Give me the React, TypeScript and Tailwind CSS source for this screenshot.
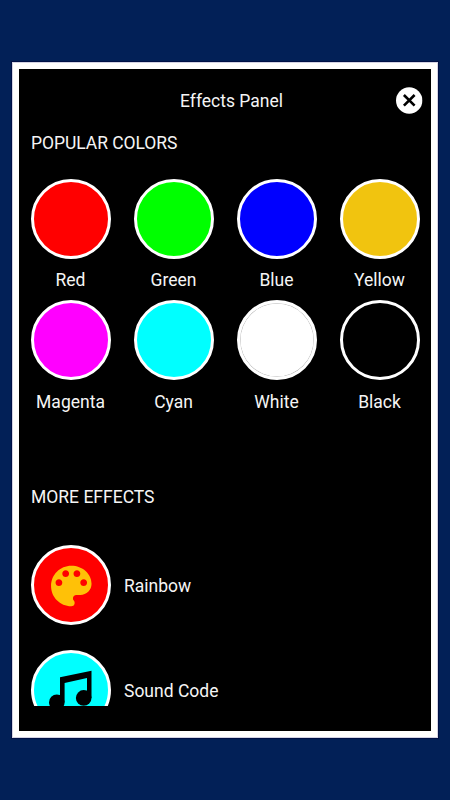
import React from "react";

const colors = [
  { name: "Red", fill: "bg-[#ff0000]" },
  { name: "Green", fill: "bg-[#00ff00]" },
  { name: "Blue", fill: "bg-[#0000ff]" },
  { name: "Yellow", fill: "bg-[#f1c40f]" },
  { name: "Magenta", fill: "bg-[#ff00ff]" },
  { name: "Cyan", fill: "bg-[#00ffff]" },
  { name: "White", fill: "bg-white shadow-[inset_0_0_0_0.5px_#b0b0b0]" },
  { name: "Black", fill: "bg-black" },
];

function Disc({ fill, children }: { fill: string; children?: React.ReactNode }) {
  return (
    <div className={`flex size-20 shrink-0 items-center justify-center rounded-full border-[3px] border-white ${fill}`}>
      {children}
    </div>
  );
}

function PaletteIcon() {
  return (
    <svg viewBox="0 0 24 24" className="size-[54px] shrink-0 translate-x-[0.3px] translate-y-[1px]" fill="#ffc107">
      <path d="M12 3c-4.97 0-9 4.03-9 9s4.03 9 9 9c.83 0 1.500-.67 1.500-1.500 0-.39-.15-.74-.39-1.010-.23-.26-.38-.61-.38-.99 0-.83.67-1.500 1.500-1.500H16c2.760 0 5-2.240 5-5 0-4.420-4.030-8-9-8zm-5.500 9c-.83 0-1.500-.67-1.500-1.500S5.670 9 6.500 9 8 9.670 8 10.500 7.330 12 6.500 12zm3-4C8.670 8 8 7.330 8 6.500S8.670 5 9.500 5s1.500.67 1.500 1.500S10.330 8 9.500 8zm5 0c-.83 0-1.500-.67-1.500-1.500S13.670 5 14.500 5s1.500.67 1.500 1.500S15.330 8 14.500 8zm3 4c-.83 0-1.500-.67-1.500-1.500S16.670 9 17.500 9s1.500.67 1.500 1.500-.67 1.500-1.500 1.500z" />
    </svg>
  );
}

function MusicIcon() {
  return (
    <svg viewBox="0 0 44 42" className="h-[42px] w-[44px] shrink-0" fill="#000">
      <path d="M11 8.200 42.500 1.700V29h-4.500V9L15.600 14v19H11z" />
      <circle cx="7.800" cy="33.300" r="7.800" />
      <circle cx="34.700" cy="28.900" r="7.800" />
    </svg>
  );
}

export default function App() {
  return (
    <div className="h-[800px] w-[450px] bg-[#022057] px-3 pt-[62px] font-['Roboto',sans-serif] text-[17.500px] leading-[22px] text-[#f5f5f5]">
      <main className="flex h-[676px] w-[426px] flex-col border-[7px] border-white bg-black shadow-[0_0_0_1px_#001047] outline outline-offset-[-1px] outline-[#d4d4e4]">
        <header className="grid h-[62px] grid-cols-[53px_1fr_40px] items-center">
          <span />
          <h1 className="pt-[2px] text-center">Effects Panel</h1>
          <button aria-label="Close" className="-translate-x-[2.300px] justify-self-center">
            <svg viewBox="0 0 27 27" className="size-[27px]">
              <circle cx="13.500" cy="13.500" r="13.200" fill="white" />
              <path d="m8.200 8 10.700 10.700M18.900 8 8.200 18.700" stroke="black" strokeWidth="2.600" />
            </svg>
          </button>
        </header>
        <h2 className="mt-px pl-3 tracking-[-0.05px]">POPULAR COLORS</h2>
        <section className="mt-[25px] grid h-[242px] grid-cols-4 grid-rows-[121.400px_120.600px]">
          {colors.map((c) => (
            <div key={c.name} className="flex flex-col items-center">
              <Disc fill={c.fill} />
              <span className="mt-[10.300px]">{c.name}</span>
            </div>
          ))}
        </section>
        <h2 className="mt-[65px] pl-3">MORE EFFECTS</h2>
        <section className="mt-[37px] h-[161px] overflow-hidden pl-3">
          <div className="flex h-[105px] items-start gap-[13px]">
            <Disc fill="bg-[#ff0000]"><PaletteIcon /></Disc>
            <span className="mt-[30px]">Rainbow</span>
          </div>
          <div className="flex items-start gap-[13px]">
            <Disc fill="bg-[#00ffff]"><MusicIcon /></Disc>
            <span className="mt-[30px]">Sound Code</span>
          </div>
        </section>
      </main>
    </div>
  );
}
